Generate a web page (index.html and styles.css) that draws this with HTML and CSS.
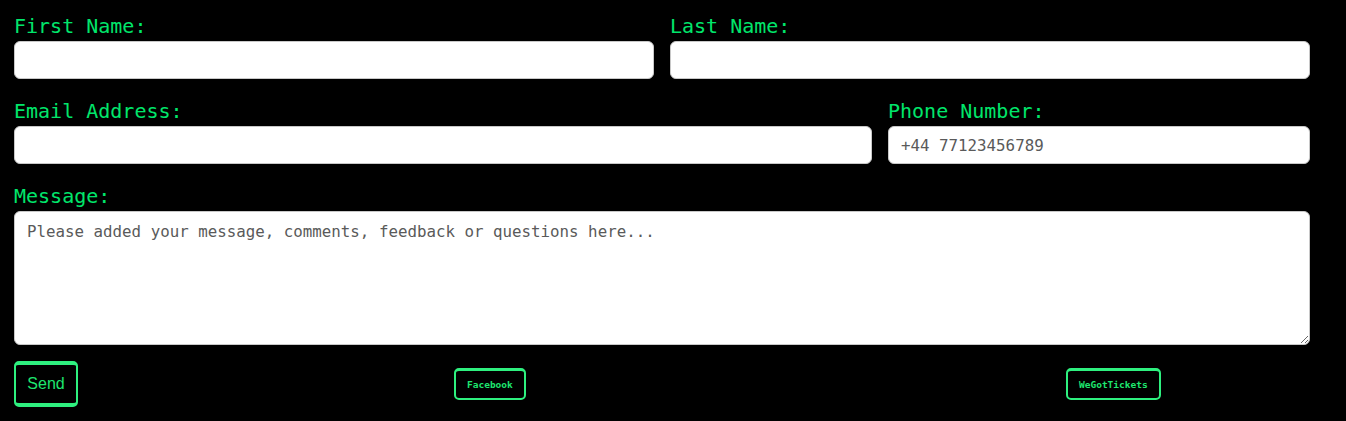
FILE: index.html
```html
<!DOCTYPE html>
<html>
<head>
<meta charset="utf-8">
<link rel="stylesheet" href="styles.css">
</head>
<body>
<form class="contact">
  <div class="row row-half">
    <div class="field">
      <label class="label">First Name:</label>
      <input class="input" type="text">
    </div>
    <div class="field">
      <label class="label">Last Name:</label>
      <input class="input" type="text">
    </div>
  </div>
  <div class="row row-wide">
    <div class="field">
      <label class="label">Email Address:</label>
      <input class="input" type="email">
    </div>
    <div class="field">
      <label class="label">Phone Number:</label>
      <input class="input" type="tel" placeholder="+44 77123456789">
    </div>
  </div>
  <div class="field field-message">
    <label class="label">Message:</label>
    <textarea class="textarea" placeholder="Please added your message, comments, feedback or questions here..."></textarea>
  </div>
  <div class="actions">
    <div class="cell"><button class="send" type="button">Send</button></div>
    <div class="cell"><a class="link" href="#">Facebook</a></div>
    <div class="cell"><a class="link" href="#">WeGotTickets</a></div>
  </div>
</form>
</body>
</html>
```

FILE: styles.css
```css
html, body {
  margin: 0;
  background: #000;
}
body {
  padding: 15px 36px 0 14px;
  font-family: "DejaVu Sans Mono", "Liberation Mono", monospace;
}
.contact {
  width: 1296px;
  display: flex;
  flex-direction: column;
}
.row {
  display: grid;
  gap: 16px;
  margin-bottom: 21px;
}
.row-half {
  grid-template-columns: 1fr 1fr;
}
.row-wide {
  grid-template-columns: 858px 422px;
}
.field {
  display: flex;
  flex-direction: column;
}
.field-message {
  margin-bottom: 16px;
}
.label {
  color: #00e66b;
  font-size: 20px;
  line-height: 23px;
  height: 23px;
  margin-bottom: 3px;
}
.input, .textarea {
  box-sizing: border-box;
  background: #fff;
  border: 1px solid #c8c8c8;
  border-radius: 6px;
  font-family: "DejaVu Sans Mono", "Liberation Mono", monospace;
  font-size: 15.8px;
  color: #333;
  outline: none;
  margin: 0;
}
.input {
  height: 38px;
  padding: 0 12px;
}
.textarea {
  height: 134px;
  padding: 10px 12px;
  resize: vertical;
}
.input::placeholder, .textarea::placeholder {
  color: #5a5a5a;
}
.actions {
  display: grid;
  grid-template-columns: 440px 612px auto;
  align-items: center;
}
.cell {
  display: flex;
}
.send {
  box-sizing: border-box;
  width: 64px;
  height: 46px;
  background: #000;
  color: #1ee66f;
  border: 2px solid #2ef07f;
  border-top-width: 4px;
  border-bottom-width: 4px;
  border-radius: 5px;
  font-family: "Liberation Sans", Arial, sans-serif;
  font-size: 16px;
  padding: 0;
}
.link {
  box-sizing: border-box;
  height: 32px;
  display: flex;
  align-items: center;
  padding: 0 11px;
  border: 2px solid #2ef07f;
  border-top-width: 3px;
  border-radius: 5px;
  color: #1ee66f;
  text-decoration: none;
  font-family: "DejaVu Sans Mono", "Liberation Mono", monospace;
  font-weight: bold;
  font-size: 9.5px;
}
```
